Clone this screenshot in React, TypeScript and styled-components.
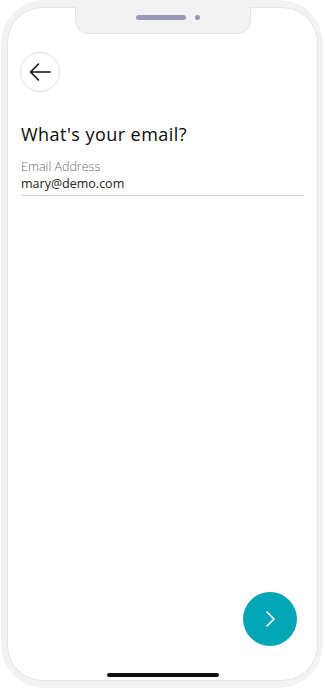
import React from "react";
import styled, { createGlobalStyle } from "styled-components";

const Global = createGlobalStyle`
  html, body { margin: 0; padding: 0; background: #ffffff; }
  body { font-family: "Open Sans", "Liberation Sans", sans-serif; }
  * { box-sizing: border-box; }
`;

const Frame = styled.div`
  margin-left: 1px;
  width: 322px;
  height: 688px;
  padding: 7px 5px 7px 6px;
  background: #f2f2f2;
  border-radius: 44px;
`;

const Screen = styled.div`
  position: relative;
  height: 100%;
  background: #ffffff;
  border: 1px solid #e6e6e6;
  border-radius: 36px;
  display: flex;
  flex-direction: column;
  padding: 44px 13px 0 12px;
`;

const Notch = styled.div`
  position: absolute;
  top: -1px;
  left: 67px;
  width: 176px;
  height: 27px;
  background: #f2f2f2;
  border: 1px solid #e4e4e4;
  border-top: none;
  border-radius: 0 0 14px 14px;
  display: flex;
  align-items: center;
  justify-content: center;
  gap: 9px;
  padding-bottom: 6px;
  padding-left: 9px;
`;

const Speaker = styled.div`
  width: 50px;
  height: 5px;
  border-radius: 3px;
  background: #9a98bb;
`;

const Camera = styled.div`
  width: 5px;
  height: 5px;
  border-radius: 50%;
  background: #9a98bb;
`;

const BackButton = styled.button`
  width: 40px;
  height: 40px;
  border-radius: 50%;
  border: 1px solid #dedede;
  background: #fff;
  display: flex;
  align-items: center;
  justify-content: center;
  padding: 0;
  flex-shrink: 0;
`;

const Title = styled.h1`
  margin: 30px 0 0 1px;
  font-family: "Open Sans", "Liberation Sans", sans-serif;
  font-weight: 500;
  font-size: 18px;
  line-height: 24px;
  letter-spacing: 0.45px;
  color: #0a0a0a;
`;

const Field = styled.div`
  margin: 12px 0 0 1px;
  display: flex;
  flex-direction: column;
  border-bottom: 1.5px solid #cfcfcf;
  padding-bottom: 3px;
`;

const Label = styled.span`
  font-size: 12.5px;
  line-height: 17px;
  font-weight: 300;
  color: #6b6b6b;
`;

const Value = styled.span`
  font-size: 12.5px;
  line-height: 17px;
  color: #222;
`;

const Spacer = styled.div`
  flex: 1;
`;

const FabRow = styled.div`
  display: flex;
  justify-content: flex-end;
`;

const Fab = styled.button`
  width: 54px;
  height: 54px;
  border-radius: 50%;
  border: none;
  background: #00a6b4;
  display: flex;
  align-items: center;
  justify-content: center;
  padding: 0;
  margin-right: 7px;
`;

const HomeRow = styled.div`
  display: flex;
  justify-content: center;
  padding: 27px 0 3px;
  margin-left: -12px;
  margin-right: -13px;
`;

const HomeBar = styled.div`
  width: 112px;
  height: 4px;
  border-radius: 2px;
  background: #111;
`;

export default function App() {
  return (
    <>
      <Global />
      <Frame>
        <Screen>
          <Notch>
            <Speaker />
            <Camera />
          </Notch>
          <BackButton aria-label="Back">
            <svg width="22" height="18" viewBox="0 0 22 18" fill="none">
              <path d="M21 9H1.5M9.5 1L1.5 9l8 8" stroke="#111" strokeWidth="1.6" strokeLinecap="round" strokeLinejoin="round" />
            </svg>
          </BackButton>
          <Title>What's your email?</Title>
          <Field>
            <Label>Email Address</Label>
            <Value>mary@demo.com</Value>
          </Field>
          <Spacer />
          <FabRow>
            <Fab aria-label="Next">
              <svg width="12" height="18" viewBox="0 0 12 18" fill="none">
                <path d="M3 2l7 7-7 7" stroke="#fff" strokeWidth="1.6" strokeLinecap="round" strokeLinejoin="round" />
              </svg>
            </Fab>
          </FabRow>
          <HomeRow>
            <HomeBar />
          </HomeRow>
        </Screen>
      </Frame>
    </>
  );
}
